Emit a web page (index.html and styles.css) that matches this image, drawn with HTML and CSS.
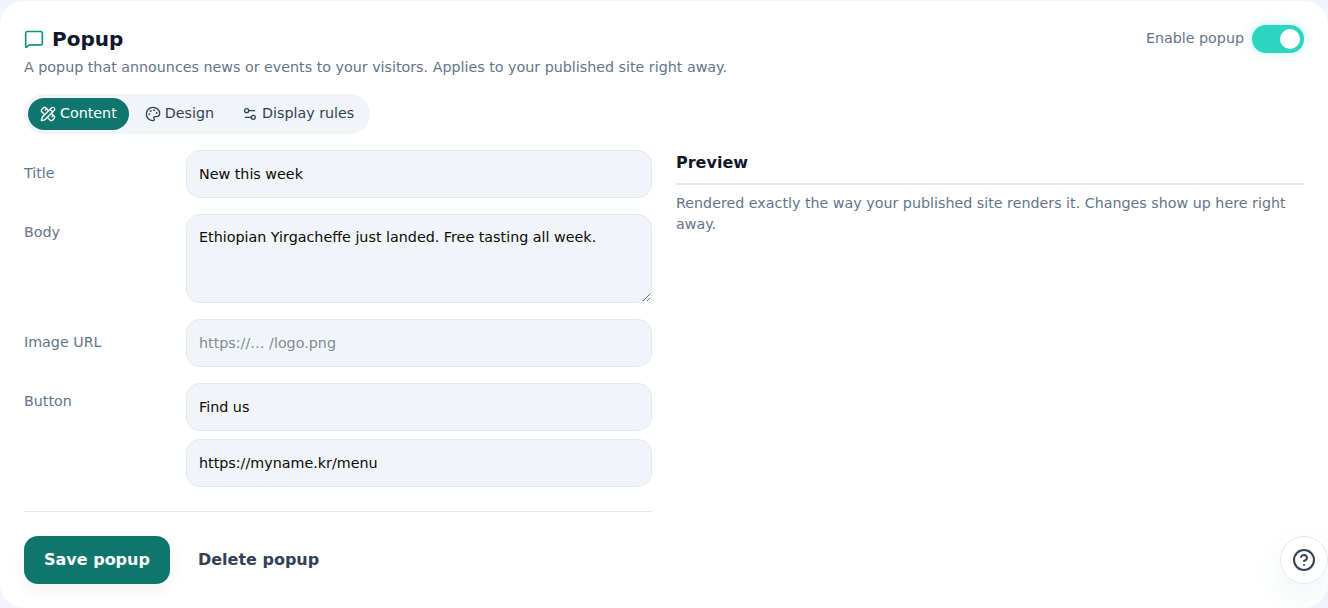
FILE: index.html
```
<!DOCTYPE html>
<html lang="en">
<head>
	<meta charset="utf-8">
	<title>Popup</title>
	<link rel="stylesheet" href="styles.css">
</head>
<body>
	<div class="card">
		<div class="head">
			<div>
				<h1 class="title">
					<svg class="title-icon" viewBox="0 0 24 24"><path d="M22 17a2 2 0 0 1-2 2H6.828a2 2 0 0 0-1.414.586l-2.202 2.202A.71.71 0 0 1 2 21.286V5a2 2 0 0 1 2-2h16a2 2 0 0 1 2 2z"/></svg>
					Popup
				</h1>
				<p class="sub">A popup that announces news or events to your visitors. Applies to your published site right away.</p>
			</div>
			<div class="enable">
				<span class="enable-text">Enable popup</span>
				<span class="toggle"><span class="knob"></span></span>
			</div>
		</div>

		<div class="tabs">
			<a class="tab on">
				<svg viewBox="0 0 24 24"><path d="M13 7 8.7 2.7a2.41 2.41 0 0 0-3.4 0L2.7 5.3a2.41 2.41 0 0 0 0 3.4L7 13"/><path d="m8 6 2-2"/><path d="m18 16 2-2"/><path d="m17 11 4.3 4.3c.94.94.94 2.46 0 3.4l-2.6 2.6c-.94.94-2.46.94-3.4 0L11 17"/><path d="M21.174 6.812a1 1 0 0 0-3.986-3.987L3.842 16.174a2 2 0 0 0-.5.83l-1.321 4.352a.5.5 0 0 0 .623.622l4.353-1.32a2 2 0 0 0 .83-.497z"/><path d="m15 5 4 4"/></svg>
				<span class="tab-text">Content</span>
			</a>
			<a class="tab">
				<svg viewBox="0 0 24 24"><path d="M12 22a1 1 0 0 1 0-20 10 9 0 0 1 10 9 5 5 0 0 1-5 5h-2.25a1.75 1.75 0 0 0-1.4 2.8l.3.4a1.75 1.75 0 0 1-1.4 2.8z"/><circle cx="13.5" cy="6.5" r=".5"/><circle cx="17.5" cy="10.5" r=".5"/><circle cx="6.5" cy="12.5" r=".5"/><circle cx="8.5" cy="7.5" r=".5"/></svg>
				<span class="tab-text">Design</span>
			</a>
			<a class="tab">
				<svg viewBox="0 0 24 24"><path d="M14 17H5"/><path d="M19 7h-9"/><circle cx="17" cy="17" r="3"/><circle cx="7" cy="7" r="3"/></svg>
				<span class="tab-text">Display rules</span>
			</a>
		</div>

		<div class="columns">
			<div class="form">
				<div class="row">
					<label class="label">Title</label>
					<div class="fields"><input class="field" type="text" value="New this week"></div>
				</div>
				<div class="row">
					<label class="label top">Body</label>
					<div class="fields"><textarea class="field area">Ethiopian Yirgacheffe just landed. Free tasting all week.</textarea></div>
				</div>
				<div class="row">
					<label class="label">Image URL</label>
					<div class="fields"><input class="field" type="text" placeholder="https://… /logo.png"></div>
				</div>
				<div class="row">
					<label class="label top">Button</label>
					<div class="fields">
						<input class="field" type="text" value="Find us">
						<input class="field" type="text" value="https://myname.kr/menu">
					</div>
				</div>
				<div class="actions">
					<button class="btn save">Save popup</button>
					<button class="btn delete">Delete popup</button>
				</div>
			</div>
			<div class="preview">
				<h2 class="preview-title">Preview</h2>
				<p class="preview-text">Rendered exactly the way your published site renders it. Changes show up here right away.</p>
			</div>
		</div>
	</div>

	<button class="help">
		<svg viewBox="0 0 24 24"><circle cx="12" cy="12" r="10"/><path d="M9.09 9a3 3 0 0 1 5.83 1c0 2-3 3-3 3"/><path d="M12 17h.01"/></svg>
	</button>
</body>
</html>
```

FILE: styles.css
```
*{margin: 0;padding: 0;box-sizing: border-box;}
html,body{height: 100%;overflow: hidden;}
body{
	background: #f1f5f9;
	font-family: "DejaVu Sans", sans-serif;
	color: #0f172a;
	padding-top: 1px;
}
svg{
	fill: none;
	stroke: currentColor;
	stroke-width: 2;
	stroke-linecap: round;
	stroke-linejoin: round;
}
.card{
	height: 607px;
	background: #fff;
	border-radius: 24px;
	padding: 24px;
}
.head{
	display: flex;
	justify-content: space-between;
	align-items: flex-start;
}
.title{
	display: flex;
	align-items: center;
	gap: 8px;
	font-size: 20px;
	line-height: 28px;
	font-weight: 700;
}
.title-icon{
	width: 20px;
	height: 20px;
	color: #0d9488;
	stroke-width: 2;
}
.sub{
	margin-top: 4px;
	font-size: 14.28px;
	line-height: 21px;
	color: #64748b;
}
.enable{
	display: flex;
	align-items: center;
	gap: 8px;
	font-size: 14.28px;
	color: #64748b;
}
.enable-text{
	margin-top: -2px;
}
.toggle{
	display: flex;
	align-items: center;
	justify-content: flex-end;
	width: 52px;
	height: 28px;
	padding: 4px;
	border-radius: 14px;
	background: #2dd4bf;
	box-shadow: 0 0 12px rgba(45,212,191,.3);
}
.knob{
	width: 20px;
	height: 20px;
	border-radius: 50%;
	background: #fff;
}
.tabs{
	display: inline-flex;
	gap: 4px;
	margin-top: 16px;
	padding: 4px;
	border-radius: 20px;
	background: #f1f5f9;
}
.tab{
	display: flex;
	align-items: center;
	gap: 4px;
	height: 32px;
	padding: 0 12px;
	border-radius: 16px;
	font-size: 14.28px;
	line-height: 20px;
	color: #334155;
}
.tab svg{
	width: 16px;
	height: 16px;
	stroke-width: 2;
}
.tab-text{
	margin-top: -2px;
}
.tab.on{
	background: #0f766e;
	color: #fff;
}
.columns{
	display: grid;
	grid-template-columns: 1fr 1fr;
	gap: 24px;
	margin-top: 16px;
}
.form{
	display: flex;
	flex-direction: column;
	gap: 16px;
}
.row{
	display: grid;
	grid-template-columns: 150px 1fr;
	gap: 12px;
}
.label{
	align-self: center;
	padding-bottom: 2px;
	font-size: 14.28px;
	line-height: 20px;
	color: #64748b;
}
.label.top{
	align-self: start;
	padding-top: 8px;
}
.fields{
	display: flex;
	flex-direction: column;
	gap: 8px;
}
.field{
	display: block;
	width: 100%;
	height: 48px;
	padding: 0 12px;
	border: 1px solid #e2e8f0;
	border-radius: 14px;
	background: #f1f5f9;
	font-family: inherit;
	font-size: 14.3px;
	color: #0a0a0a;
	outline: none;
}
.field::placeholder{
	color: #848b94;
}
.area{
	height: 89px;
	padding: 12px;
	line-height: 20px;
}
.actions{
	display: flex;
	gap: 8px;
	margin-top: 8px;
	padding-top: 24px;
	border-top: 1px solid #e2e8f0;
}
.btn{
	height: 48px;
	padding: 0 20px 2px;
	border: none;
	border-radius: 14px;
	font-family: inherit;
	font-size: 16px;
	font-weight: 700;
	background: none;
}
.save{
	background: #0f766e;
	color: #fff;
	box-shadow: 0 6px 16px rgba(15,23,42,.06);
}
.delete{
	color: #334155;
}
.preview-title{
	padding-top: 2px;
	padding-bottom: 9px;
	border-bottom: 2px solid #e2e8f0;
	font-size: 16px;
	line-height: 22px;
	font-weight: 700;
}
.preview-text{
	margin-top: 8px;
	font-size: 14.28px;
	line-height: 21.4px;
	color: #64748b;
}
.help{
	position: fixed;
	right: 0;
	bottom: 24px;
	display: flex;
	align-items: center;
	justify-content: center;
	width: 48px;
	height: 48px;
	border: 1px solid #e2e8f0;
	border-radius: 50%;
	background: #fff;
	color: #334155;
	box-shadow: 0 12px 32px rgba(15,118,110,.07);
}
.help svg{
	width: 24px;
	height: 24px;
}
```
